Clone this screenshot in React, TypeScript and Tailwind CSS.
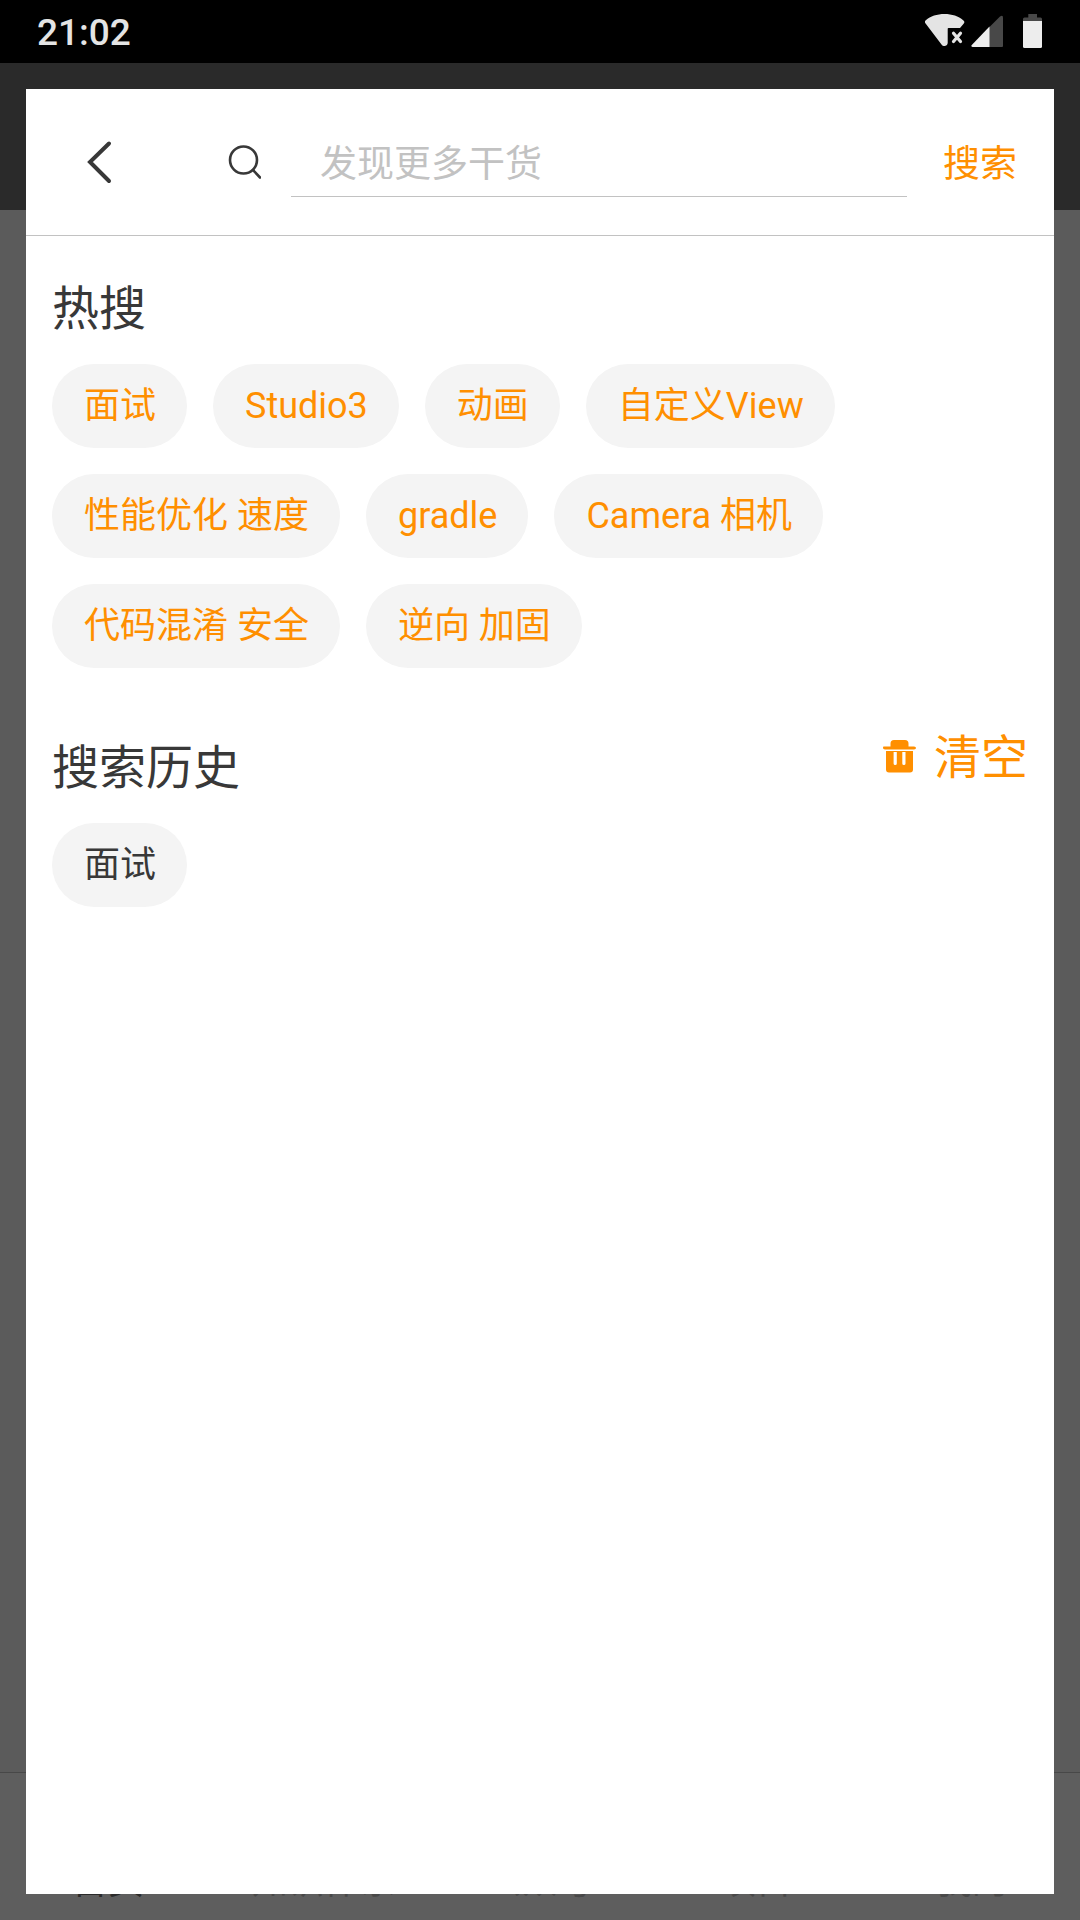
import React, { useState } from "react";

const hotKeys = [
  "面试",
  "Studio3",
  "动画",
  "自定义View",
  "性能优化 速度",
  "gradle",
  "Camera 相机",
  "代码混淆 安全",
  "逆向 加固",
];

const tabs = ["首页", "知识体系", "公众号", "项目", "我的"];

function StatusBar() {
  return (
    <div className="flex h-[63px] shrink-0 items-start justify-between bg-black pr-[38px] pl-[37px] text-[#e4e4e4]">
      <time className="pt-[9px] text-[37px] leading-[48px] font-medium">21:02</time>
      <div className="flex items-center pt-[13px]">
        <svg className="mr-1.5 h-9 w-10" viewBox="0 0 40 36" fill="#e4e4e4" aria-label="Wi-Fi">
          <path d="M.8 7.200C5.500 3.200 12 1 19.500 1s14 2.200 18.700 6.200c1.400 1.100 1.500 2.100.6 3.300L35 15H23.500q-.8 0-.8.8V30c-.2 3.400-4.500 4-6.200 1.500L.4 10.300C-.4 9-.2 8.200.8 7.200Z" />
          <path d="m28.500 20.300 7 8.200m0-8.200-7 8.200" stroke="#e4e4e4" strokeWidth="3.200" strokeLinecap="round" />
        </svg>
        <svg className="mr-5 h-9 w-8" viewBox="0 0 32 36" aria-label="Signal">
          <path d="M18 14.500 29 3.500q3-2 3 1V33q0 1-1 1H18Z" fill="#484848" />
          <path d="M18.500 13.500V34H1.500q-2-.4-.7-2Z" fill="#ededed" />
        </svg>
        <svg className="h-9 w-[19px]" viewBox="0 0 19 36" aria-label="Battery">
          <path d="M5.300 1h8.700v3.500h3.500Q19 4.500 19 6v2H0V6q0-1.500 1.500-1.500h3.800Z" fill="#484848" />
          <path d="M0 8h19v25.500q0 1.500-1.500 1.500h-16Q0 35 0 33.500Z" fill="#ededed" />
        </svg>
      </div>
    </div>
  );
}

function Chip({ label, onClick, dark = false }: { label: string; onClick: () => void; dark?: boolean }) {
  return (
    <button
      type="button"
      onClick={onClick}
      className={
        dark
          ? "h-[84px] rounded-full bg-[#f4f4f4] pr-[31px] pl-8 text-[36px] leading-[42px] text-[#383838]"
          : "h-[84px] rounded-full bg-[#f4f4f4] pr-[31px] pl-8 text-[36px] leading-[42px] text-[#ff8f00]"
      }
    >
      {label}
    </button>
  );
}

function Backdrop() {
  return (
    <div className="absolute inset-0 flex flex-col bg-[#5b5b5b]" aria-hidden="true">
      <div className="h-[147px] bg-[#2a2a2a]" />
      <div className="flex-1" />
      <div className="grid h-[148px] grid-cols-5 items-end border-t border-[#484848] bg-[#5e5e5e] pb-3.5 text-center text-[36px] leading-[48px] text-[#484848]">
        {tabs.map((tab, i) => (
          <span key={tab} className={i === 0 ? "text-[#2a2a2a]" : ""}>
            {tab}
          </span>
        ))}
      </div>
    </div>
  );
}

export default function App() {
  const [query, setQuery] = useState("");
  const [history, setHistory] = useState(["面试"]);

  return (
    <div className="flex min-h-screen flex-col font-['Roboto','Noto_Sans_CJK_SC',sans-serif]">
      <StatusBar />
      <div className="relative flex flex-1 flex-col">
        <Backdrop />
        <main className="relative m-[26px] flex-1 bg-white">
          <form
            className="flex h-[147px] items-center border-b border-[#c2c2c2] pr-[37px]"
            onSubmit={(e) => e.preventDefault()}
          >
            <button type="button" aria-label="返回" className="flex h-full w-[147px] items-center justify-center">
              <svg className="h-12 w-12" viewBox="0 0 48 48" fill="none" stroke="#383838" strokeWidth="4" strokeLinecap="round" strokeLinejoin="miter">
                <path d="M33 5.500 14 24l19 19" />
              </svg>
            </button>
            <svg className="ml-[52px] h-9 w-9 shrink-0" viewBox="0 0 36 36" fill="none" stroke="#383838" strokeWidth="2.600" strokeLinecap="round">
              <circle cx="18.500" cy="16" r="13.500" />
              <path d="m28 26 7 7.500" />
            </svg>
            <input
              type="text"
              aria-label="搜索关键词"
              placeholder="发现更多干货"
              value={query}
              onChange={(e) => setQuery(e.target.value)}
              className="ml-[30px] h-[69px] min-w-0 flex-1 border-b border-[#c2c2c2] bg-transparent pt-1.5 pl-[29px] text-[37px] text-[#383838] outline-none placeholder:text-[#c2c2c2]"
            />
            <button type="submit" className="ml-9 pt-1.5 text-[37px] leading-[48px] text-[#ff8f00]">
              搜索
            </button>
          </form>

          <section className="px-[26px] pt-[45px]">
            <h2 className="text-[47px] leading-[56px] text-[#383838]">热搜</h2>
            <div className="mt-[27px] flex flex-wrap gap-[26px]">
              {hotKeys.map((k) => (
                <Chip key={k} label={k} onClick={() => setQuery(k)} />
              ))}
            </div>
          </section>

          <section className="px-[26px] pt-[62px]">
            <div className="flex items-start justify-between">
              <h2 className="pt-2.5 text-[47px] leading-[56px] text-[#383838]">搜索历史</h2>
              <button
                type="button"
                onClick={() => setHistory([])}
                className="flex items-center gap-[17px] text-[47px] leading-[56px] text-[#ff8f00]"
              >
                <svg className="mb-1 h-9 w-9" viewBox="0 0 36 36" fill="#ff8f00" aria-hidden="true">
                  <path d="M2.500 8.500h7V5.500Q9.500 2 13 2h11q3.500 0 3.500 3.500v3H33q2 .2 2 1.500T33 11.500H4Q2 11.300 2 10t.5-1.500Z" />
                  <path fillRule="evenodd" d="M5 13h27v18.500q0 3-3 3H8q-3 0-3-3Zm7.600 1v11.500a1.600 1.600 0 0 0 3.200 0V14Zm8.700 0v11.500a1.600 1.600 0 0 0 3.200 0V14Z" />
                </svg>
                清空
              </button>
            </div>
            <div className="mt-[27px] flex flex-wrap gap-[26px]">
              {history.map((k) => (
                <Chip key={k} label={k} dark onClick={() => setQuery(k)} />
              ))}
            </div>
          </section>
        </main>
      </div>
    </div>
  );
}
